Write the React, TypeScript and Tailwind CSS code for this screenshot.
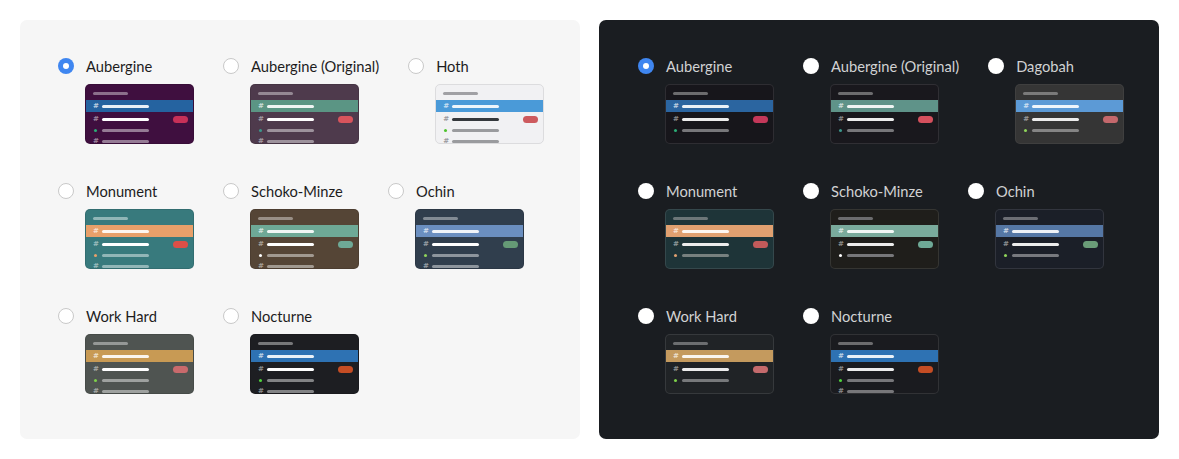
import React from 'react'

type Theme = {
  name: string
  bg: string
  border: string
  top: string
  active: string
  hash: string
  row3: string
  pill: string
  dot: string
  row4: string
  tail?: boolean
}

const lightThemes: Theme[] = [
  { name: 'Aubergine', bg: 'bg-[#3f0f3f]', border: 'border-black/10', top: 'bg-white/40', active: 'bg-[#2563a0]', hash: 'text-white/50', row3: 'bg-white', pill: 'bg-[#c73058]', dot: 'bg-[#2bac76]', row4: 'bg-white/45', tail: true },
  { name: 'Aubergine (Original)', bg: 'bg-[#4e3a4c]', border: 'border-black/10', top: 'bg-white/40', active: 'bg-[#5b9584]', hash: 'text-white/50', row3: 'bg-white', pill: 'bg-[#d8545c]', dot: 'bg-[#3c968b]', row4: 'bg-white/45', tail: true },
  { name: 'Hoth', bg: 'bg-[#f1f1f3]', border: 'border-[#dcdcde]', top: 'bg-[#a0a0a4]', active: 'bg-[#4a9ad8]', hash: 'text-[#9a9a9e]', row3: 'bg-[#34383c]', pill: 'bg-[#cd5a5e]', dot: 'bg-[#4ec32d]', row4: 'bg-[#9a9b9e]', tail: true },
  { name: 'Monument', bg: 'bg-[#387a7d]', border: 'border-black/10', top: 'bg-white/45', active: 'bg-[#e8a06a]', hash: 'text-white/50', row3: 'bg-white', pill: 'bg-[#dd4f47]', dot: 'bg-[#e8a06a]', row4: 'bg-white/45', tail: true },
  { name: 'Schoko-Minze', bg: 'bg-[#554536]', border: 'border-black/10', top: 'bg-white/40', active: 'bg-[#6ea996]', hash: 'text-white/50', row3: 'bg-white', pill: 'bg-[#6ea996]', dot: 'bg-white', row4: 'bg-white/45', tail: true },
  { name: 'Ochin', bg: 'bg-[#303e4d]', border: 'border-black/10', top: 'bg-white/40', active: 'bg-[#6b8fc0]', hash: 'text-white/50', row3: 'bg-white', pill: 'bg-[#659a76]', dot: 'bg-[#8fd45a]', row4: 'bg-white/45', tail: true },
  { name: 'Work Hard', bg: 'bg-[#4f5451]', border: 'border-black/10', top: 'bg-white/40', active: 'bg-[#c89a54]', hash: 'text-white/50', row3: 'bg-white', pill: 'bg-[#c96a6c]', dot: 'bg-[#7ed04a]', row4: 'bg-white/45', tail: true },
  { name: 'Nocturne', bg: 'bg-[#1d1e22]', border: 'border-black/10', top: 'bg-white/40', active: 'bg-[#2e72b3]', hash: 'text-white/50', row3: 'bg-white', pill: 'bg-[#c54d24]', dot: 'bg-[#4fd43c]', row4: 'bg-white/45', tail: true },
]

const darkThemes: Theme[] = [
  { name: 'Aubergine', bg: 'bg-[#17161b]', border: 'border-white/10', top: 'bg-[#6c6c6e]', active: 'bg-[#2b65a0]', hash: 'text-white/50', row3: 'bg-[#ececec]', pill: 'bg-[#c4385a]', dot: 'bg-[#2bac76]', row4: 'bg-[#77777a]' },
  { name: 'Aubergine (Original)', bg: 'bg-[#19181d]', border: 'border-white/10', top: 'bg-[#6c6c6e]', active: 'bg-[#5f9389]', hash: 'text-white/50', row3: 'bg-[#ececec]', pill: 'bg-[#d5505d]', dot: 'bg-[#3c968b]', row4: 'bg-[#77777a]' },
  { name: 'Dagobah', bg: 'bg-[#353535]', border: 'border-white/5', top: 'bg-[#7a7a7a]', active: 'bg-[#5c9ad6]', hash: 'text-white/50', row3: 'bg-[#ececec]', pill: 'bg-[#c4686c]', dot: 'bg-[#8fd45a]', row4: 'bg-[#858585]' },
  { name: 'Monument', bg: 'bg-[#1e3438]', border: 'border-white/10', top: 'bg-[#6c7678]', active: 'bg-[#e0a070]', hash: 'text-white/50', row3: 'bg-[#ececec]', pill: 'bg-[#c25a5a]', dot: 'bg-[#e0a070]', row4: 'bg-[#77807f]' },
  { name: 'Schoko-Minze', bg: 'bg-[#1f1e1b]', border: 'border-white/10', top: 'bg-[#6c6c6e]', active: 'bg-[#7aab9c]', hash: 'text-white/50', row3: 'bg-[#ececec]', pill: 'bg-[#6ea996]', dot: 'bg-white', row4: 'bg-[#77777a]' },
  { name: 'Ochin', bg: 'bg-[#1b1f28]', border: 'border-white/10', top: 'bg-[#6c6e74]', active: 'bg-[#5577a5]', hash: 'text-white/50', row3: 'bg-[#ececec]', pill: 'bg-[#6a9c78]', dot: 'bg-[#8fd45a]', row4: 'bg-[#77797e]' },
  { name: 'Work Hard', bg: 'bg-[#202326]', border: 'border-white/10', top: 'bg-[#6c6e70]', active: 'bg-[#c49a5e]', hash: 'text-white/50', row3: 'bg-[#ececec]', pill: 'bg-[#c46a6c]', dot: 'bg-[#7ed04a]', row4: 'bg-[#77797b]' },
  { name: 'Nocturne', bg: 'bg-[#1a1b1f]', border: 'border-white/10', top: 'bg-[#6c6c6e]', active: 'bg-[#2e72b3]', hash: 'text-white/50', row3: 'bg-[#ececec]', pill: 'bg-[#c54d24]', dot: 'bg-[#4fd43c]', row4: 'bg-[#77777a]', tail: true },
]

function Hash({ className }: { className: string }) {
  return (
    <span className={`w-[9px] text-[7px] leading-none font-bold ${className}`} style={{ fontFamily: '"DejaVu Sans", sans-serif' }}>
      #
    </span>
  )
}

function Preview({ t }: { t: Theme }) {
  return (
    <div className={`ml-[27px] mt-2 w-[109px] h-[60px] rounded-[5px] border overflow-hidden ${t.bg} ${t.border}`}>
      <div className="pt-[7px] pl-[7px]">
        <div className={`w-[35px] h-[3px] rounded-full ${t.top}`} />
      </div>
      <div className={`mt-[5px] h-[12px] flex items-center pl-[7px] ${t.active}`}>
        <Hash className="text-white/70" />
        <div className="w-[47px] h-[3px] rounded-full bg-white/90" />
      </div>
      <div className="mt-[2px] h-[11px] flex items-center pl-[7px] pr-[5px]">
        <Hash className={t.hash} />
        <div className={`w-[47px] h-[3px] rounded-full ${t.row3}`} />
        <div className={`ml-auto w-[15px] h-[7px] rounded-full ${t.pill}`} />
      </div>
      <div className="h-[11px] flex items-center pl-[7px]">
        <span className="w-[9px] flex">
          <span className={`w-[3px] h-[3px] ml-[1px] rounded-full ${t.dot}`} />
        </span>
        <div className={`w-[47px] h-[3px] rounded-full ${t.row4}`} />
      </div>
      {t.tail && (
        <div className="h-[11px] flex items-center pl-[7px]">
          <Hash className={t.hash} />
          <div className={`w-[47px] h-[3px] rounded-full ${t.row4}`} />
        </div>
      )}
    </div>
  )
}

function Radio({ checked, dark }: { checked: boolean; dark: boolean }) {
  if (checked) {
    return (
      <span className="w-4 h-4 rounded-full bg-[#3f86f0] flex items-center justify-center shrink-0">
        <span className="w-[6px] h-[6px] rounded-full bg-white" />
      </span>
    )
  }
  return (
    <span
      className={`w-4 h-4 rounded-full shrink-0 ${dark ? 'bg-white' : 'bg-white border border-[#c9c9c9]'}`}
    />
  )
}

function Panel({ themes, dark }: { themes: Theme[]; dark: boolean }) {
  return (
    <div
      className={`w-[560px] h-[419px] rounded-[7px] pt-[36px] ${dark ? 'bg-[#1a1d21] pl-[39px]' : 'bg-[#f6f6f6] pl-[38px]'}`}
    >
      <div className="flex flex-wrap gap-x-[29px] gap-y-[37px] w-[500px]">
        {themes.map((t, i) => (
          <div key={t.name} className="flex flex-col">
            <label className="flex items-center h-5 gap-3">
              <Radio checked={i === 0} dark={dark} />
              <span className={`text-[14.7px] leading-5 ${dark ? 'text-[#d1d2d3]' : 'text-[#1d1c1d]'}`}>{t.name}</span>
            </label>
            <Preview t={t} />
          </div>
        ))}
      </div>
    </div>
  )
}

export default function App() {
  return (
    <div className="w-[1179px] h-[459px] bg-white flex gap-[19px] p-5" style={{ fontFamily: 'Lato, "Noto Sans", sans-serif' }}>
      <Panel themes={lightThemes} dark={false} />
      <Panel themes={darkThemes} dark={true} />
    </div>
  )
}
